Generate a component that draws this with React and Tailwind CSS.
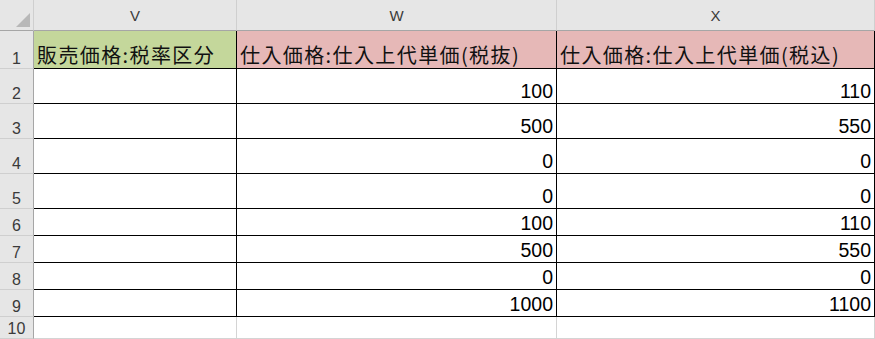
import React from 'react';

const cols = ['V', 'W', 'X'];
const colW = ['w-[203px]', 'w-[320px]', 'w-[318px]'];

const rows = [
  { n: 1, h: 'h-[38px]', head: true },
  { n: 2, h: 'h-[35px]', w: '100', x: '110' },
  { n: 3, h: 'h-[35px]', w: '500', x: '550' },
  { n: 4, h: 'h-[35px]', w: '0', x: '0' },
  { n: 5, h: 'h-[35px]', w: '0', x: '0' },
  { n: 6, h: 'h-[27px]', w: '100', x: '110' },
  { n: 7, h: 'h-[27px]', w: '500', x: '550' },
  { n: 8, h: 'h-[27px]', w: '0', x: '0' },
  { n: 9, h: 'h-[27px]', w: '1000', x: '1100' },
  { n: 10, h: 'h-[22px]', empty: true },
];

const jp = "font-['Noto_Sans_CJK_JP',sans-serif]";
const num = "font-['Liberation_Sans',Arial,sans-serif]";

const RowHead = ({ n, h }) => (
  <div
    className={`${h} w-[34px] shrink-0 flex items-end justify-center pb-[1px] bg-[#e6e6e6] border-r border-r-[#a6a6a6] border-b border-b-[#cfcfcf] text-[16px] leading-none text-[#3a3a3a] ${num}`}
  >
    {n}
  </div>
);

const headCell = `shrink-0 flex items-end pl-[3px] pb-[1px] border-r border-b border-black text-[20px] tracking-[1.4px] leading-[1.2] text-[#111] whitespace-nowrap ${jp}`;

export default function App() {
  return (
    <div className="w-[875px] h-[339px] bg-white overflow-hidden">
      <div className="flex h-[31px]">
        <div className="w-[34px] h-[31px] shrink-0 bg-[#e6e6e6] border-r border-r-[#cfcfcf] border-b border-b-[#a6a6a6] relative">
          <div className="absolute right-[3px] bottom-[3px] w-0 h-0 border-l-[14px] border-l-transparent border-b-[14px] border-b-[#b8b8b8]" />
        </div>
        {cols.map((c, i) => (
          <div
            key={c}
            className={`${colW[i]} h-[31px] shrink-0 flex items-center justify-center pt-[2px] bg-[#e6e6e6] border-r border-r-[#cfcfcf] border-b border-b-[#a6a6a6] text-[15px] text-[#3a3a3a] ${num}`}
          >
            {c}
          </div>
        ))}
      </div>

      {rows.map((r) => (
        <div key={r.n} className="flex">
          <RowHead n={r.n} h={r.h} />
          {r.head ? (
            <>
              <div className={`${colW[0]} ${r.h} bg-[#c4d79b] ${headCell}`}>
                販売価格:税率区分
              </div>
              <div className={`${colW[1]} ${r.h} bg-[#e6b8b7] ${headCell}`}>
                仕入価格:仕入上代単価(税抜)
              </div>
              <div className={`${colW[2]} ${r.h} bg-[#e6b8b7] ${headCell}`}>
                仕入価格:仕入上代単価(税込)
              </div>
            </>
          ) : r.empty ? (
            cols.map((c, i) => (
              <div key={c} className={`${colW[i]} ${r.h} shrink-0 border-r border-b border-[#d4d4d4]`} />
            ))
          ) : (
            <>
              <div className={`${colW[0]} ${r.h} shrink-0 border-r border-b border-black`} />
              {[r.w, r.x].map((v, i) => (
                <div
                  key={i}
                  className={`${colW[i + 1]} ${r.h} shrink-0 flex items-end justify-end pr-[3px] pb-[2px] border-r border-b border-black text-[19.5px] leading-none text-black ${num}`}
                >
                  {v}
                </div>
              ))}
            </>
          )}
        </div>
      ))}
    </div>
  );
}
